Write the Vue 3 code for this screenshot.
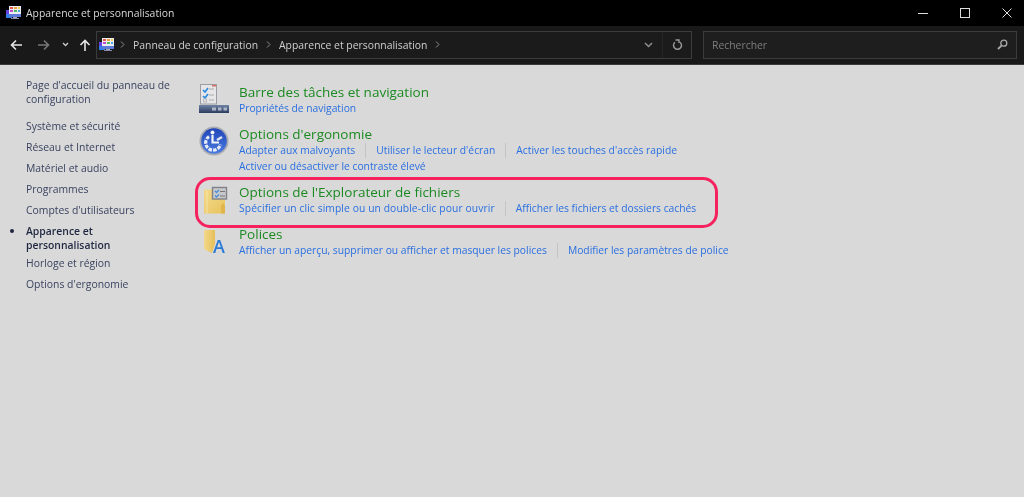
<script setup>
const side = ['Système et sécurité','Réseau et Internet','Matériel et audio','Programmes',"Comptes d'utilisateurs"]
const groups = [
  { id:'bar', title:'Barre des tâches et navigation', lines:[['Propriétés de navigation']] },
  { id:'erg', title:"Options d'ergonomie", lines:[['Adapter aux malvoyants',"Utiliser le lecteur d'écran","Activer les touches d'accès rapide"],['Activer ou désactiver le contraste élevé']] },
  { id:'exp', title:"Options de l'Explorateur de fichiers", lines:[['Spécifier un clic simple ou un double-clic pour ouvrir','Afficher les fichiers et dossiers cachés']] },
  { id:'pol', title:'Polices', lines:[['Afficher un aperçu, supprimer ou afficher et masquer les polices','Modifier les paramètres de police']] },
]
</script>

<template>
  <div class="win">
    <header class="title">
      <svg class="cp" viewBox="0 0 16 16" width="16" height="16">
        <rect x="0" y="5" width="6" height="8" fill="#6a3fe0"/>
        <rect x="0" y="9" width="6" height="4" fill="#2f7fe8"/>
        <rect x="3" y="1" width="12" height="10" fill="#ececf4"/>
        <rect x="4" y="2" width="3" height="2" fill="#e85a4a"/><rect x="8" y="2" width="3" height="2" fill="#f0a040"/><rect x="12" y="2" width="2" height="2" fill="#f3d34a"/>
        <rect x="4" y="5" width="3" height="2" fill="#c04ac8"/><rect x="8" y="5" width="3" height="2" fill="#50b860"/><rect x="12" y="5" width="2" height="2" fill="#40a8e0"/>
        <rect x="3" y="9" width="12" height="3" fill="#5c7ad8"/>
        <rect x="7" y="12" width="4" height="1" fill="#aab"/><rect x="5" y="13" width="8" height="1" fill="#8a8aa8"/>
      </svg>
      <span class="title-text">Apparence et personnalisation</span>
      <div class="controls">
        <svg width="10" height="10" viewBox="0 0 10 10"><path d="M0 5.500h10" stroke="#ddd" fill="none"/></svg>
        <svg width="10" height="10" viewBox="0 0 10 10"><rect x=".5" y=".5" width="9" height="9" stroke="#ddd" fill="none"/></svg>
        <svg width="10" height="10" viewBox="0 0 10 10"><path d="M.5.500l9 9M9.500.500l-9 9" stroke="#ddd" fill="none"/></svg>
      </div>
    </header>
    <nav class="navbar">
      <div class="arrows">
        <svg width="12" height="12" viewBox="0 0 12 12"><path d="M12 6H1.500M6 1.500L1.500 6 6 10.500" stroke="#e6e6e6" stroke-width="1.600" fill="none"/></svg>
        <svg width="12" height="12" viewBox="0 0 12 12"><path d="M0 6h10.500M6 1.500L10.500 6 6 10.500" stroke="#777" stroke-width="1.600" fill="none"/></svg>
        <svg width="7" height="5" viewBox="0 0 7 5"><path d="M1 1l2.500 2.500L6 1" stroke="#ccc" stroke-width="1.300" fill="none"/></svg>
        <svg width="12" height="12" viewBox="0 0 12 12"><path d="M6 12V1.500M1.500 6L6 1.500 10.500 6" stroke="#e6e6e6" stroke-width="1.600" fill="none"/></svg>
      </div>
      <div class="addr">
        <svg class="cp" viewBox="0 0 16 16" width="16" height="16">
          <rect x="0" y="5" width="6" height="8" fill="#6a3fe0"/>
          <rect x="0" y="9" width="6" height="4" fill="#2f7fe8"/>
          <rect x="3" y="1" width="12" height="10" fill="#ececf4"/>
          <rect x="4" y="2" width="3" height="2" fill="#e85a4a"/><rect x="8" y="2" width="3" height="2" fill="#f0a040"/><rect x="12" y="2" width="2" height="2" fill="#f3d34a"/>
          <rect x="4" y="5" width="3" height="2" fill="#c04ac8"/><rect x="8" y="5" width="3" height="2" fill="#50b860"/><rect x="12" y="5" width="2" height="2" fill="#40a8e0"/>
          <rect x="3" y="9" width="12" height="3" fill="#5c7ad8"/>
          <rect x="7" y="12" width="4" height="1" fill="#aab"/><rect x="5" y="13" width="8" height="1" fill="#8a8aa8"/>
        </svg>
        <svg class="sep" width="5" height="7" viewBox="0 0 5 7"><path d="M1 .5l3 3-3 3" stroke="#8a8a8a" fill="none"/></svg>
        <span>Panneau de configuration</span>
        <svg class="sep" width="5" height="7" viewBox="0 0 5 7"><path d="M1 .5l3 3-3 3" stroke="#8a8a8a" fill="none"/></svg>
        <span>Apparence et personnalisation</span>
        <svg class="sep" width="5" height="7" viewBox="0 0 5 7"><path d="M1 .5l3 3-3 3" stroke="#8a8a8a" fill="none"/></svg>
        <div class="addr-end">
          <svg width="9" height="6" viewBox="0 0 9 6"><path d="M1 1l3.500 3.500L8 1" stroke="#8f8f8f" stroke-width="1.500" fill="none"/></svg>
          <i class="vr"></i>
          <svg width="11" height="12" viewBox="0 0 11 12"><path d="M3 3.200a4 4 0 1 0 5 0M3.500 1h3.500v3" stroke="#9a9a9a" stroke-width="1.400" fill="none"/></svg>
        </div>
      </div>
      <div class="search">
        <span>Rechercher</span>
        <svg width="11" height="11" viewBox="0 0 11 11"><circle cx="6.800" cy="4.200" r="3" stroke="#aaa" stroke-width="1.300" fill="none"/><path d="M4.800 6.300L1 10" stroke="#aaa" stroke-width="1.800"/></svg>
      </div>
    </nav>
    <div class="body">
      <aside class="side">
        <a class="home">Page d'accueil du panneau de configuration</a>
        <a v-for="s in side" :key="s" class="item">{{ s }}</a>
        <a class="item cur">Apparence et personnalisation</a>
        <a class="item">Horloge et région</a>
        <a class="item">Options d'ergonomie</a>
      </aside>
      <main class="main">
        <section v-for="g in groups" :key="g.id" class="grp" :class="g.id">
          <div class="ico">
            <svg v-if="g.id==='bar'" width="30" height="30" viewBox="0 0 30 30">
              <defs><linearGradient id="tb" x1="0" y1="0" x2="0" y2="1"><stop offset="0" stop-color="#6f83a6"/><stop offset="1" stop-color="#2c3c5e"/></linearGradient></defs>
              <rect x="1.500" y=".5" width="16" height="19.500" fill="#e6e6e8" stroke="#9c9ca2"/>
              <rect x="13" y="1" width="4" height="1.500" fill="#d86a6a"/>
              <path d="M4 6l2 2 3-4M4 12l2 2 3-4" stroke="#2a8ae0" stroke-width="1.600" fill="none"/>
              <path d="M10 5h5M10 11h5M10 16h5" stroke="#aaa"/>
              <rect x="4.500" y="15" width="3" height="3" fill="none" stroke="#bbb"/>
              <rect x="0" y="21" width="30" height="8" fill="url(#tb)"/>
              <path d="M13 25h4M19 25h3.500M24.500 25h3.500" stroke="#aeb6c6" stroke-width="3"/>
            </svg>
            <svg v-else-if="g.id==='erg'" width="30" height="30" viewBox="0 0 30 30">
              <defs><linearGradient id="bl" x1="0" y1="0" x2="0" y2="1"><stop offset="0" stop-color="#2246b8"/><stop offset="1" stop-color="#4a7ae0"/></linearGradient></defs>
              <circle cx="15" cy="15" r="14.500" fill="#a9abb2"/>
              <circle cx="15" cy="15" r="12.800" fill="url(#bl)"/>
              <circle cx="13.500" cy="6.500" r="2" fill="#f2f4fa"/>
              <path d="M13.500 9v7.500h6.500" stroke="#f2f4fa" stroke-width="2.200" fill="none"/>
              <path d="M10 10.500a7.500 7.500 0 1 0 11.500 8" stroke="#e8ecf6" stroke-width="3.200" stroke-dasharray="3.500 1.200" fill="none"/>
              <path d="M18 14l5-3" stroke="#dfe5f4" stroke-width="2.400"/>
            </svg>
            <svg v-else-if="g.id==='exp'" width="30" height="30" viewBox="0 0 30 30">
              <defs><linearGradient id="fy" x1="0" y1="0" x2="1" y2="1"><stop offset="0" stop-color="#f3d98a"/><stop offset="1" stop-color="#e8c45e"/></linearGradient></defs>
              <path d="M5 5.500h17v2h4v22H5z" fill="url(#fy)"/>
              <path d="M22 22l2-3 2 3v7.500h-4z" fill="#e0b54c"/>
              <path d="M8 7v22" stroke="#f6e3a6"/>
              <rect x="13.500" y="3.500" width="14" height="11.500" fill="#c6c8cc" stroke="#808288" stroke-width="1.400"/>
              <path d="M16 7l1.500 1.500L20 6M16 11.500l1.500 1.500L20 10.500" stroke="#3a88d8" stroke-width="1.100" fill="none"/>
              <path d="M21 7.500h5M21 12h5" stroke="#777"/>
            </svg>
            <svg v-else width="30" height="30" viewBox="0 0 30 30" class="ico-pol">
              <defs><linearGradient id="fp" x1="0" y1="0" x2="1" y2="0"><stop offset="0" stop-color="#f3d98a"/><stop offset="1" stop-color="#e6be58"/></linearGradient></defs>
              <path d="M5 4h11v14l-3 9-8-4z" fill="url(#fp)"/>
              <text x="20" y="27" text-anchor="middle" class="glyph">A</text>
            </svg>
          </div>
          <div class="txt">
            <h2>{{ g.title }}</h2>
            <div v-for="(l,i) in g.lines" :key="i" class="line">
              <a v-for="t in l" :key="t">{{ t }}</a>
            </div>
          </div>
        </section>
        <div class="ring"></div>
      </main>
    </div>
  </div>
</template>

<style>
html, body { margin: 0; background: #d9d9d9; }
</style>

<style scoped>
.win { width: 1024px; height: 497px; display: flex; flex-direction: column; overflow: hidden; font-family: "Open Sans", "Noto Sans", sans-serif; background: #d9d9d9; filter: blur(.3px); }
.title { height: 26px; background: #000; display: flex; align-items: center; padding: 0 0 1px 6px; box-sizing: border-box; color: #d8d8d8; font-size: 10.4px; }
.title-text { margin-left: 4px; }
.controls { margin-left: auto; display: flex; align-items: center; gap: 32px; padding-right: 12px; }
.navbar { height: 39px; background: #191919; display: flex; align-items: center; border-bottom: 1px solid #3a3a3a; box-sizing: border-box; padding-bottom: 1px; }
.arrows { display: flex; align-items: center; width: 96px; padding-left: 10px; box-sizing: border-box; }
.arrows svg:nth-child(2) { margin-left: 16px; }
.arrows svg:nth-child(3) { margin-left: 12px; }
.arrows svg:nth-child(4) { margin-left: 10px; }
.addr { width: 596px; height: 28px; box-sizing: border-box; border: 1px solid #3c3c3c; background: #1b1b1b; display: flex; align-items: center; color: #cfcfcf; font-size: 10.4px; padding-left: 2px; }
.addr .cp { margin-right: 3px; }
.sep { margin: 0 8px 0 2px; }
.addr span + .sep { margin-left: 8px; margin-right: 8px; }
.addr-end { margin-left: auto; display: flex; align-items: center; height: 100%; }
.addr-end svg:first-child { margin-right: 9px; }
.addr-end svg:last-child { margin: 0 8px 0 9px; }
.vr { width: 1px; height: 100%; background: #262626; }
.search { margin-left: 11px; width: 314px; height: 28px; box-sizing: border-box; border: 1px solid #3c3c3c; background: #1e1e1e; display: flex; align-items: center; justify-content: space-between; padding: 0 8px; color: #7d7d7d; font-size: 10.4px; }
.body { flex: 1; display: flex; }
.side { width: 199px; box-sizing: border-box; padding: 13px 0 0 26px; display: flex; flex-direction: column; font-size: 10.4px; line-height: 14px; color: #3a4360; }
.home { width: 150px; margin-bottom: 13px; }
.item { margin-bottom: 7px; }
.cur { position: relative; font-weight: 600; color: #1f2740; width: 100px; margin-bottom: 4px; }
.cur::before { content: ""; position: absolute; left: -16px; top: 5px; width: 4px; height: 4px; border-radius: 50%; background: #1f2740; }
.main { position: relative; flex: 1; padding-top: 17px; }
.grp { display: flex; align-items: flex-start; margin-bottom: 8px; }
.grp.exp { margin-bottom: 8px; }
.ico { width: 40px; height: 30px; flex: none; margin-top: 2px; }
.ico svg { overflow: visible; }
.glyph { font: 600 18px "Open Sans", sans-serif; fill: #2a7ad6; }
h2 { margin: 0; padding-top: 1px; font-weight: 400; font-size: 13.5px; line-height: 18px; color: #1c8a22; }
.line { font-size: 10.3px; line-height: 15px; color: #2a6fe0; display: flex; margin-top: 1px; }
.txt h2 + .line { margin-top: 0; }
.line a + a { margin-left: 10px; padding-left: 10px; border-left: 1px solid #c4c4c4; }
.exp .line a:first-child { letter-spacing: .09px; }
.ring { position: absolute; left: -4px; top: 112px; width: 523px; height: 51px; box-sizing: border-box; border: 3px solid #f5225f; border-radius: 15px; }
</style>
